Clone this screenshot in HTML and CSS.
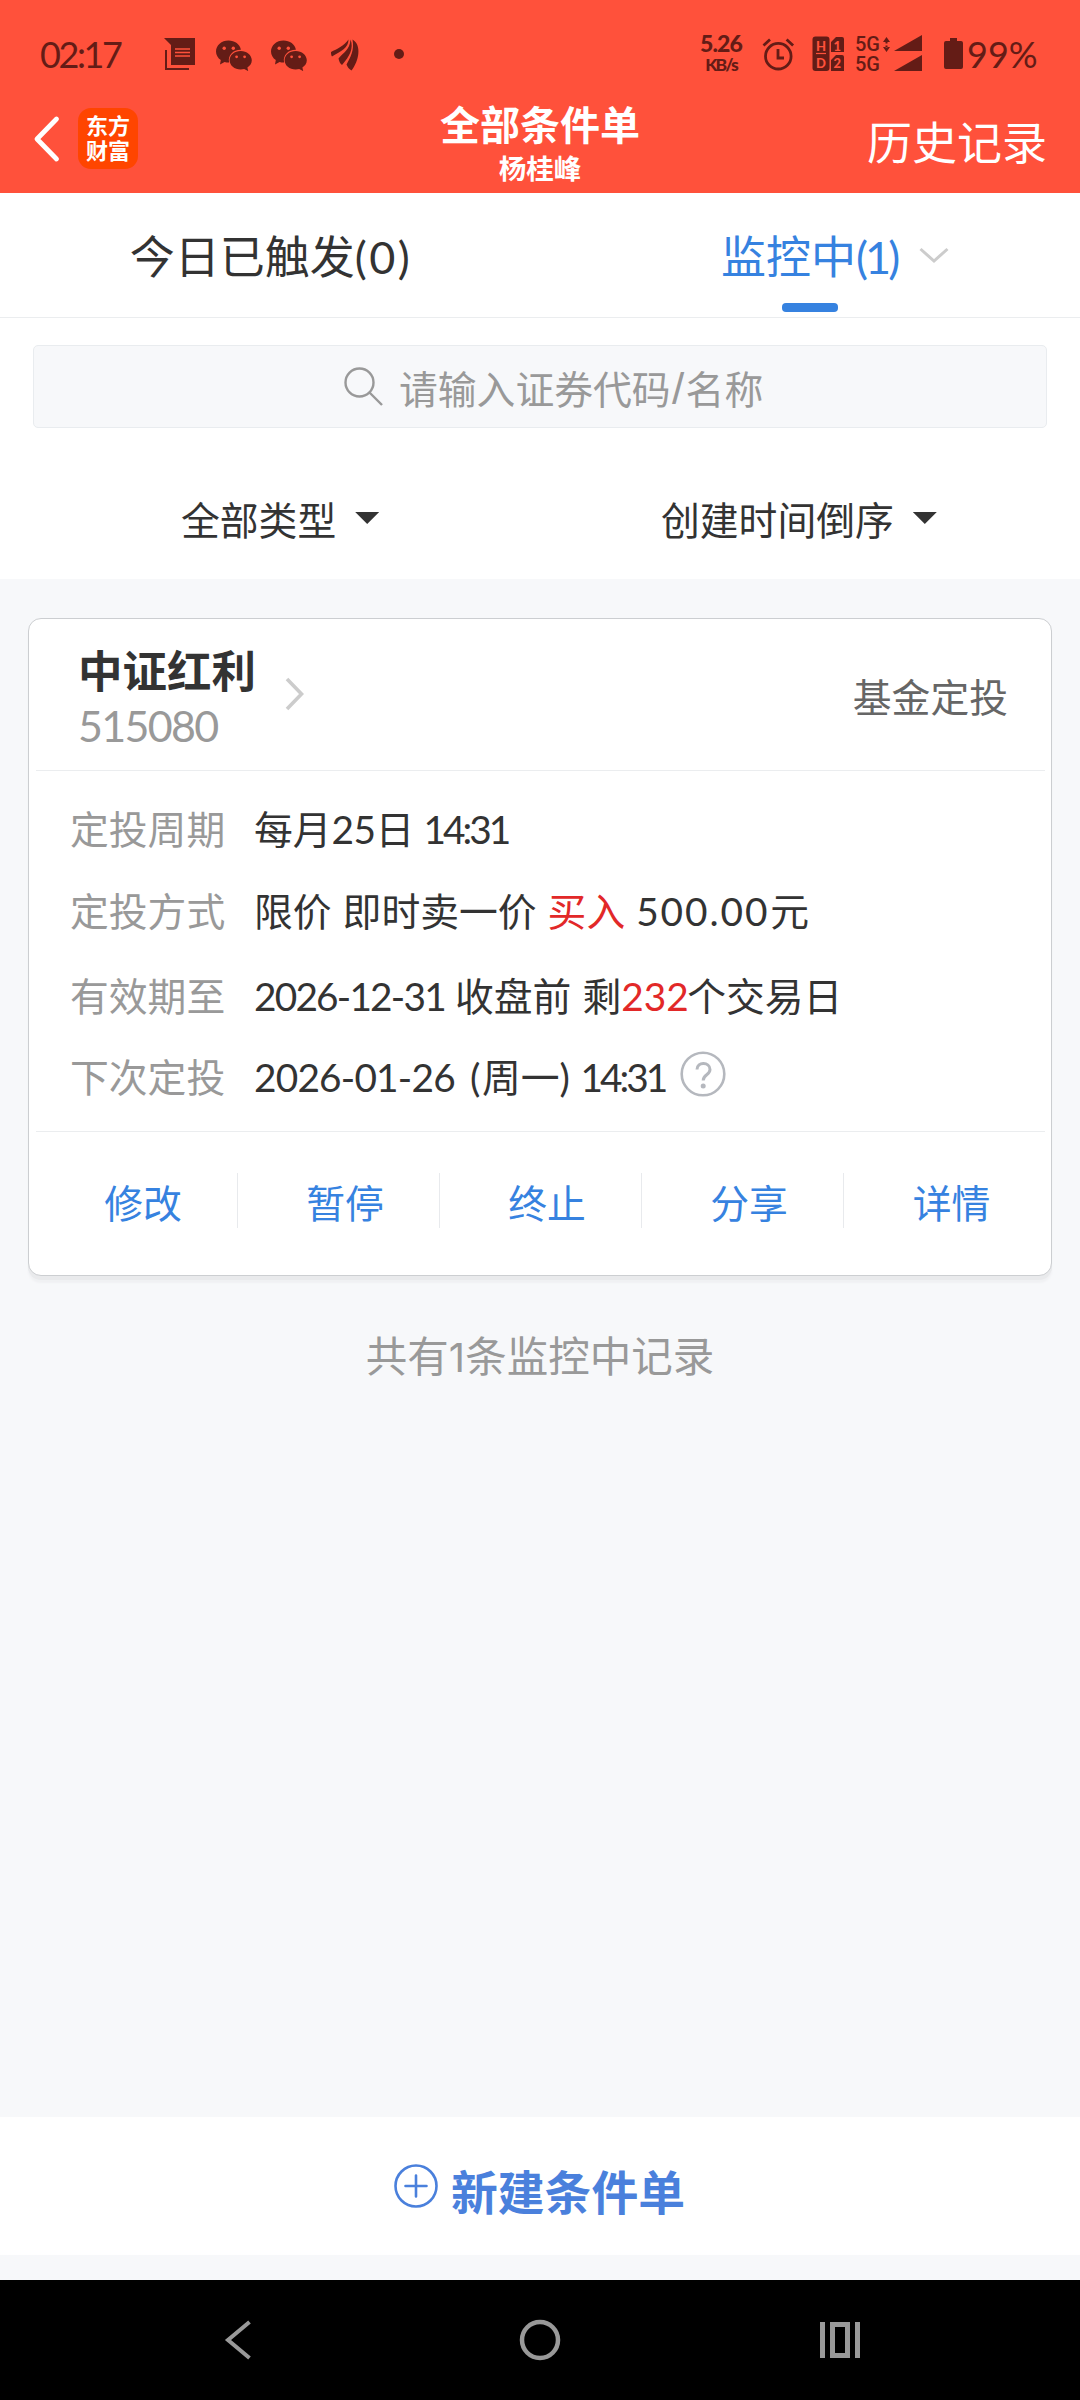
FILE: index.html
```html
<!DOCTYPE html>
<html lang="zh-CN">
<head>
<meta charset="utf-8">
<title>全部条件单</title>
<link rel="stylesheet" href="styles.css">
</head>
<body>
<svg class="defs" width="0" height="0" aria-hidden="true">
  <symbol id="wechat" viewBox="0 0 36 30">
    <path fill="#641c16" d="M12.500 0C5.600 0 0 4.900 0 11c0 3.500 1.900 6.600 4.800 8.600L4 24l4.600-2.600c1.300.4 2.600.5 3.900.5h.6C11.500 14.500 17.500 9 24.900 9.200 24 3.900 18.800 0 12.500 0z"/>
    <path fill="#641c16" d="M24.700 10.500c-6.200 0-11.100 4.200-11.100 9.300s4.900 9.300 11.100 9.300c1.200 0 2.400-.2 3.500-.5l4 2-.8-3.500c2.600-1.700 4.400-4.300 4.400-7.300 0-5.100-5-9.300-11.100-9.300z"/>
    <g fill="#ff513b"><circle cx="8.200" cy="7.800" r="1.700"/><circle cx="17.300" cy="7.800" r="1.700"/><circle cx="20.600" cy="16.300" r="1.400"/><circle cx="28.600" cy="16.300" r="1.400"/></g>
  </symbol>
</svg>

<header class="top">
  <div class="status">
    <span class="clock">02:17</span>
    <svg class="i-doc" width="32" height="33" viewBox="0 0 32 33"><path fill="#641c16" d="M0 0h31v27H7V7z"/><path d="M2 12v19h23" fill="none" stroke="#641c16" stroke-width="2"/><path d="M11 11h15M11 14.500h15M11 18h15" stroke="#ff513b" stroke-width="1.300"/></svg>
    <svg class="i-wc1" width="36" height="31"><use href="#wechat"/></svg>
    <svg class="i-wc2" width="36" height="31"><use href="#wechat"/></svg>
    <svg class="i-leaf" width="28" height="32" viewBox="0 0 28 32" fill="#641c16"><path d="M0 13C6 10 13 7 17.500.5 17.500 9 10 12 1 17.500 0 16 0 14.500 0 13z"/><path d="M7.500 19.500C12 14 19 10.500 19.500.5c3.500 9-1 17-8.500 25.500-2-1.500-3-4-3.500-6.500z"/><path d="M15.500 25.500c4-7.500 8-14 6-25C31 6 28 22 20.500 31.500c-2.500-1.500-4-3.500-5-6z"/></svg>
    <i class="dot"></i>
    <div class="speed"><b>5.26</b><b class="unit">KB/s</b></div>
    <svg class="i-alarm" width="33" height="33" viewBox="0 0 33 33" fill="none" stroke="#641c16" stroke-width="2.800"><circle cx="16.300" cy="18.200" r="12.800"/><path d="M1.500 7.500L8 1.500M24.600 1.500l6.500 6M16 11v9h6"/></svg>
    <svg class="i-hd" width="33" height="36" viewBox="0 0 33 36"><rect x="0.500" y="0.500" width="17" height="34.500" rx="3" fill="#641c16"/><path fill="#641c16" d="M24 1h6a2 2 0 0 1 2 2v13H19V6zM24 19h6a2 2 0 0 1 2 2v14H19V24z"/><path d="M4 17.500h10" stroke="#ff513b" stroke-width="1.200"/><g class="hdt"><text x="4" y="15">H</text><text x="4" y="31.500">D</text><text x="21.500" y="14.500">1</text><text x="21.500" y="32">2</text></g></svg>
    <div class="net"><span>5G</span><span>5G</span></div>
    <svg class="i-sig" width="40" height="37" viewBox="0 0 40 37" fill="#641c16"><path d="M3.500 2L7 7H0zM3.500 17L7 12H0zM2.500 6.500h2v2h-2zM2.500 10.500h2v2h-2zM11 16L39 0v16zM11 36L39 20v16z"/></svg>
    <svg class="i-bat" width="19" height="32" viewBox="0 0 19 32"><path fill="#641c16" d="M6 0h7v3h4q2 0 2 2v24q0 2-2 2H2q-2 0-2-2V5q0-2 2-2h4z"/></svg>
    <span class="pct">99%</span>
  </div>
  <div class="nav">
    <div class="nav-left">
      <svg width="26" height="46" viewBox="0 0 26 46"><path d="M22.500 3L3 23l19.500 20" fill="none" stroke="#fff" stroke-width="4.800" stroke-linecap="round" stroke-linejoin="round"/></svg>
      <div class="logo"><span>东方</span><span>财富</span></div>
    </div>
    <div class="nav-title"><h1>全部条件单</h1><p>杨桂峰</p></div>
    <div class="nav-right">历史记录</div>
  </div>
</header>

<nav class="tabs">
  <div class="tab">今日已触发<span class="lat paren0">(0)</span></div>
  <div class="tab on"><span class="tab-label">监控中<span class="lat paren1">(1)</span></span><svg width="30" height="17" viewBox="0 0 30 17"><path d="M1.500 2L15 14 28.500 2" fill="none" stroke="#ccc" stroke-width="3"/></svg></div>
</nav>

<section class="tools">
  <div class="search">
    <svg width="40" height="40" viewBox="0 0 40 40" fill="none" stroke="#999" stroke-width="2.400"><circle cx="15.500" cy="16.500" r="14"/><path d="M25.500 26.500L38 39"/></svg>
    <span>请输入证券代码<span class="slash">/</span>名称</span>
  </div>
  <div class="filters">
    <div class="filter">全部类型<i class="caret"></i></div>
    <div class="filter f2">创建时间倒序<i class="caret"></i></div>
  </div>
</section>

<main class="list">
  <article class="card">
    <div class="card-head">
      <div class="sec"><h2>中证红利</h2><span class="lat code">515080</span></div>
      <svg width="20" height="34" viewBox="0 0 20 34"><path d="M2 2l14.500 15L2 32" fill="none" stroke="#ccc" stroke-width="3.600"/></svg>
      <span class="kind">基金定投</span>
    </div>
    <dl class="rows">
      <div class="row"><dt>定投周期</dt><dd>每月<span class="lat n25">25</span>日<span class="lat n1431">14:31</span></dd></div>
      <div class="row"><dt>定投方式</dt><dd>限价<i class="sp"></i>即时卖一价<i class="sp"></i><em>买入</em><i class="sp"></i><span class="lat n500">500.00</span>元</dd></div>
      <div class="row r3"><dt>有效期至</dt><dd><span class="lat nd1">2026-12-31</span>收盘前<i class="sp"></i>剩<em class="lat n232">232</em>个交易日</dd></div>
      <div class="row r4"><dt>下次定投</dt><dd><span class="lat nd2">2026-01-26</span><span class="lat par">(</span>周一<span class="lat par">)</span><span class="lat n1431">14:31</span></dd><svg class="help" width="46" height="46" viewBox="0 0 46 46"><circle cx="23" cy="23" r="21.300" fill="none" stroke="#b5b8be" stroke-width="2.600"/><path d="M17 18.500c0-8.500 13-7.500 13 0 0 5.500-6.800 5-6.800 11" fill="none" stroke="#b5b8be" stroke-width="3"/><circle cx="23.200" cy="35" r="2.500" fill="#b5b8be"/></svg></div>
    </dl>
    <div class="actions"><a>修改</a><a>暂停</a><a>终止</a><a>分享</a><a>详情</a></div>
  </article>
  <p class="total">共有<span class="one">1</span>条监控中记录</p>
</main>

<div class="create">
  <svg width="44" height="44" viewBox="0 0 44 44" fill="none" stroke="#4a80dc" stroke-width="2.600"><circle cx="22" cy="22" r="20.500"/><path d="M11.500 22h21M22 11.500v21" stroke-linecap="round"/></svg>
  <span>新建条件单</span>
</div>

<footer class="sys">
  <svg width="36" height="40" viewBox="0 0 36 40"><path d="M24.500 2L3 20l21.500 18" fill="none" stroke="#999" stroke-width="4"/></svg>
  <svg width="42" height="42" viewBox="0 0 42 42"><circle cx="21" cy="21" r="18" fill="none" stroke="#999" stroke-width="4.500"/></svg>
  <svg width="42" height="38" viewBox="0 0 42 38"><path fill="#999" fill-rule="evenodd" d="M1 1h5v36H1zM36 1h5v36h-5zM11 1h20v36H11zM16 6v26h10V6z"/></svg>
</footer>
</body>
</html>
```
FILE: styles.css
```css
* { box-sizing: border-box; margin: 0; padding: 0; }
body {
  width: 1080px; height: 2400px; overflow: hidden;
  display: flex; flex-direction: column;
  background: #f7f8fa; color: #333;
  font-family: "Noto Sans CJK SC", sans-serif; font-size: 38.8px; line-height: 56px;
}
.defs { position: absolute; }
svg { display: block; flex: none; overflow: visible; }
em, i { font-style: normal; }
.lat { font-family: Lato, sans-serif; line-height: 1; display: inline-block; white-space: nowrap; }

.top { height: 193px; flex: none; background: #ff513b; }
.status { height: 104px; display: flex; align-items: flex-start; padding: 0 40px; color: #641c16; font-family: Lato, sans-serif; white-space: nowrap; }
.clock { width: 124px; margin-top: 36px; font-size: 36px; line-height: 36px; letter-spacing: -2.4px; }
.i-doc { margin-top: 38px; }
.i-wc1 { margin: 40px 0 0 20px; }
.i-wc2 { margin: 40px 0 0 19px; }
.i-leaf { margin: 39px 0 0 24px; }
.dot { width: 10px; height: 10px; margin: 49px 296px 0 35px; border-radius: 50%; background: #641c16; }
.speed { width: 42px; margin: 32px 20px 0 0; display: flex; flex-direction: column; align-items: center; font-size: 23px; line-height: 22px; letter-spacing: -.9px; }
.speed b { font-weight: 900; }
.speed .unit { font-size: 17.500px; line-height: 21px; letter-spacing: -1.900px; }
.i-alarm { margin-top: 38px; }
.i-hd { margin: 36px 0 0 17px; }
.hdt { font: 900 13px Lato, sans-serif; fill: #ff513b; }
.net { width: 26px; margin: 34px 0 0 10px; display: flex; flex-direction: column; font: 500 20px/20px Roboto, sans-serif; }
.i-sig { margin: 35px 0 0 2px; }
.i-bat { margin: 38px 0 0 21px; }
.pct { margin: 36px 0 0 4px; font-size: 36px; line-height: 36px; letter-spacing: 0; }

.nav { height: 89px; display: grid; grid-template-columns: 1fr auto 1fr; color: #fff; }
.nav-left { display: flex; padding: 0 0 0 34px; gap: 18px; }
.nav-left svg { margin-top: 12px; }
.logo { width: 60px; height: 61px; margin-top: 4px; border-radius: 13px; background: #ff4500; display: flex; flex-direction: column; align-items: center; padding-top: 6px; font: 700 22px/25px "Liberation Sans", "Noto Sans CJK SC", sans-serif; }
.nav-title { text-align: center; font-family: Lato, "Noto Sans CJK SC", sans-serif; }
.nav-title h1 { font-size: 40px; line-height: 42px; }
.nav-title p { font-size: 27.500px; line-height: 36px; font-weight: 700; margin-top: 5px; }
.nav-right { text-align: right; font-size: 45px; line-height: 56px; padding: 9px 33px 0 0; }

.tabs { height: 125px; flex: none; display: grid; grid-template-columns: 1fr 1fr; background: #fff; border-bottom: 1px solid #ebedef; font-size: 45px; line-height: 124px; }
.tab { text-align: center; height: 124px; position: relative; }
.paren0 { letter-spacing: 2.5px; margin-right: -2px; }
.paren1 { letter-spacing: -3px; }
.tab.on { color: #3682e0; display: flex; padding-left: 181px; gap: 22px; }
.tab.on svg { margin-top: 54px; }
.tab.on::after { content: ""; position: absolute; left: 242px; top: 110px; width: 56px; height: 9px; border-radius: 4px; background: #3682e0; }

.tools { height: 261px; flex: none; background: #fff; padding: 27px 33px 0; }
.search { height: 83px; border: 1px solid #e9ecef; border-radius: 5px; background: #f7f8fa; display: flex; padding-left: 310px; gap: 15px; line-height: 82px; color: #999; }
.search svg { margin-top: 20px; }
.slash { display: inline-block; width: 15px; text-align: center; font-family: "Liberation Sans", sans-serif; font-size: 44px; line-height: 1; }
.filters { display: grid; grid-template-columns: 1fr 1fr; margin: 0 -33px; padding-top: 62px; }
.filter { display: flex; gap: 19px; padding-left: 181px; }
.f2 { padding-left: 121px; }
.caret { width: 24px; height: 12px; margin-top: 22px; background: #333; clip-path: polygon(0 0, 100% 0, 50% 100%); }

.list { flex: 1; padding: 39px 28px 0; }
.card { height: 658px; background: #fff; border: 1px solid #ccced1; border-radius: 13px; box-shadow: 0 4px 0 #e9eaec, 0 7px 2px #f0f1f3; padding: 0 6px 0 7px; }
.card-head { height: 152px; border-bottom: 1px solid #ebedef; display: flex; padding: 22px 37px 0 42px; }
.sec { width: 207px; display: flex; flex-direction: column; }
.sec h2 { font-size: 44.500px; line-height: 56px; }
.code { font-size: 43px; line-height: 58px; color: #999; letter-spacing: -1.700px; }
.card-head svg { margin-top: 36px; }
.kind { margin: 26px 0 0 auto; color: #666; }
.rows { height: 361px; border-bottom: 1px solid #ebedef; padding: 15px 0 0 34px; }
.row { height: 82px; display: flex; line-height: 82px; }
.r3 { height: 86px; line-height: 88px; }
.r4 { height: 78px; line-height: 78px; }
dt { width: 184px; color: #999; }
dd { white-space: nowrap; }
em { color: #e22828; }
.sp { display: inline-block; width: 11px; }
.n25 { width: 44px; letter-spacing: -.5px; }
.n1431 { width: 85px; margin-left: 9px; letter-spacing: -3px; }
.n500 { width: 134px; letter-spacing: 1.900px; }
.nd1 { width: 201px; letter-spacing: -1.8px; }
.nd2 { width: 216px; letter-spacing: -.8px; }
.n232 { width: 66px; }
.par { width: 12px; }
.help { margin: 15px 0 0 14px; }
.actions { display: grid; grid-template-columns: repeat(5, 202px); padding-top: 41px; color: #3682e0; }
.actions a { height: 55px; line-height: 56px; text-align: center; padding-left: 13px; border-right: 1px solid #e8eaed; }
.actions a:last-child { border: 0; }
.total { margin-top: 48px; line-height: 60px; font-size: 41.500px; color: #999; text-align: center; }
.one { font-family: Inter, sans-serif; font-size: 40px; line-height: 1; }

.create { height: 138px; flex: none; margin-bottom: 25px; background: #fff; display: flex; gap: 13px; padding-left: 394px; color: #4a80dc; font-size: 46.800px; font-weight: 700; line-height: 145px; }
.create svg { margin-top: 47px; }

.sys { height: 120px; flex: none; background: #000; display: flex; align-items: center; justify-content: space-between; padding: 0 219px 0 225px; }
```
